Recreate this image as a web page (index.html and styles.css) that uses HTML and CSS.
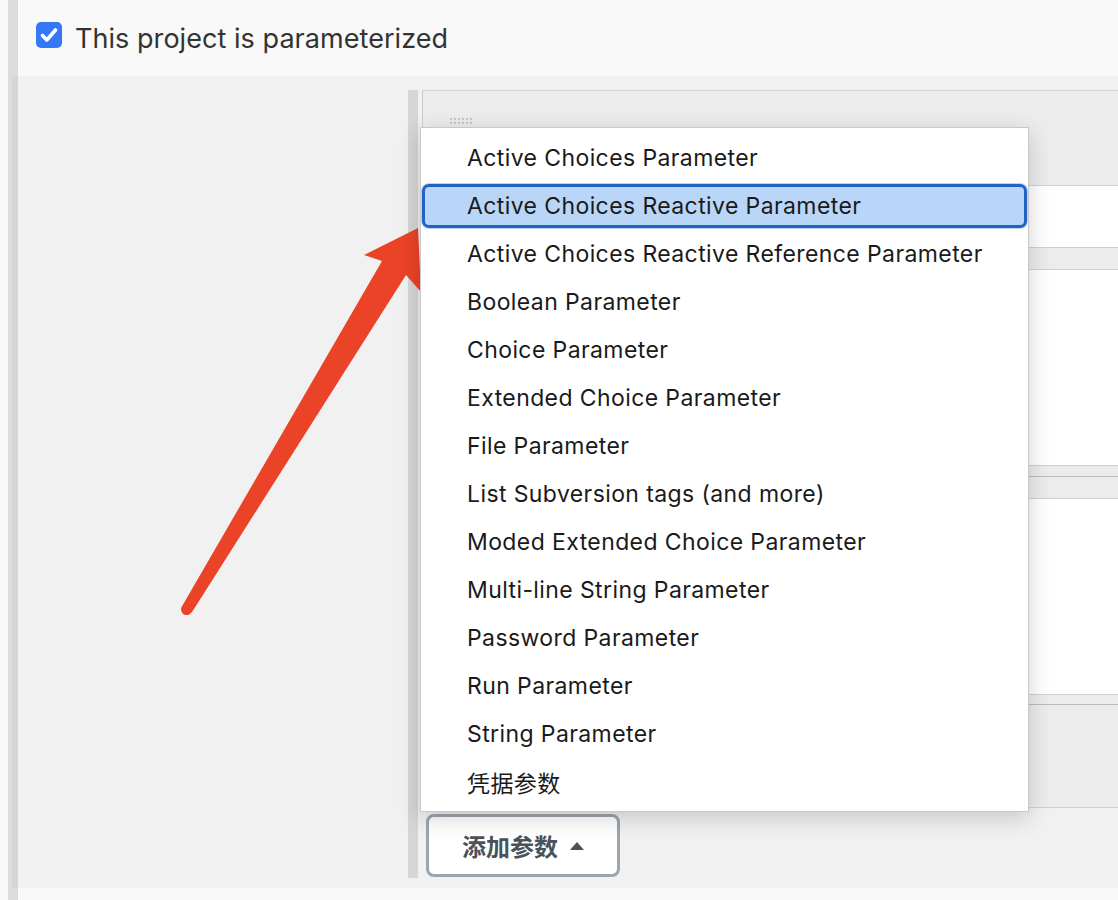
FILE: index.html
```html
<!DOCTYPE html>
<html lang="zh">
<head>
<meta charset="utf-8">
<title>Parameters</title>
<link rel="stylesheet" href="styles.css">
</head>
<body>
<div class="page">
  <div class="rail"></div>
  <div class="main">
    <div class="header">
      <span class="checkbox">
        <svg viewBox="0 0 26 26" width="26" height="26"><path d="M6.5 13.5 L10.8 18 L19.5 8" fill="none" stroke="#fff" stroke-width="3.6" stroke-linecap="round" stroke-linejoin="round"/></svg>
      </span>
      <span class="label">This project is parameterized</span>
    </div>
    <div class="panel">
      <div class="inner-rail"></div>
      <div class="content">
        <div class="chunk">
          <div class="head"><span class="grip"></span></div>
          <div class="field f1"></div>
          <div class="sub"></div>
          <div class="field f2"></div>
          <div class="gap g1"></div>
          <div class="sub"></div>
          <div class="field f2"></div>
          <div class="gap g2"></div>
          <div class="tail"></div>
        </div>
        <button class="add">添加参数<span class="tri"></span></button>
      </div>
    </div>
  </div>
</div>

<svg class="arrow" width="1118" height="900" viewBox="0 0 1118 900">
  <path d="M418,228 L364,255 L382,261 L181,608 Q181,616 188,615 Q191,614 194,609 L406,275 L421,292 Z" fill="#eb4327"/>
</svg>

<ul class="menu">
  <li class="item">Active Choices Parameter</li>
  <li class="item selected">Active Choices Reactive Parameter</li>
  <li class="item">Active Choices Reactive Reference Parameter</li>
  <li class="item">Boolean Parameter</li>
  <li class="item">Choice Parameter</li>
  <li class="item">Extended Choice Parameter</li>
  <li class="item">File Parameter</li>
  <li class="item">List Subversion tags (and more)</li>
  <li class="item">Moded Extended Choice Parameter</li>
  <li class="item">Multi-line String Parameter</li>
  <li class="item">Password Parameter</li>
  <li class="item">Run Parameter</li>
  <li class="item">String Parameter</li>
  <li class="item">凭据参数</li>
</ul>
</body>
</html>
```
FILE: styles.css
```css
html, body {
  margin: 0;
  padding: 0;
}
body {
  width: 1118px;
  height: 900px;
  overflow: hidden;
  background: #f9f9f9;
  font-family: "Inter", "Noto Sans CJK SC", sans-serif;
  position: relative;
}
.page {
  display: flex;
  padding-left: 8px;
  height: 900px;
}
.rail {
  width: 10px;
  flex: none;
  background: #dcdcdc;
}
.main {
  flex: 1;
  margin-left: -6px;
  min-width: 0;
}
.header {
  height: 76px;
  box-sizing: border-box;
  padding: 22px 0 0 24px;
  display: flex;
  align-items: flex-start;
}
.checkbox {
  width: 26px;
  height: 26px;
  border-radius: 5px;
  background: #3478f6;
  display: block;
  flex: none;
}
.checkbox svg { display: block; }
.label {
  margin-left: 13px;
  font-size: 27px;
  line-height: 32px;
  margin-top: 1px;
  letter-spacing: 0.05px;
  color: #333;
}
.panel {
  height: 812px;
  box-sizing: border-box;
  padding: 14px 0 10px 396px;
  background: rgba(0, 0, 0, 0.03);
  display: flex;
}
.inner-rail {
  width: 10px;
  flex: none;
  background: #d6d6d6;
}
.content {
  flex: 1;
  margin-left: 4px;
  min-width: 0;
}
.chunk {
  border-top: 1px solid #d4d4d4;
  border-left: 1px solid #cccccc;
}
.chunk > div {
  border-bottom: 1px solid #d0d0d0;
}
.head {
  height: 95px;
  background: #ececec;
  box-sizing: border-box;
  padding: 26px 0 0 26px;
}
.grip {
  display: block;
  width: 24px;
  height: 8px;
  background-image: radial-gradient(circle, #c6c6c6 1px, transparent 1.3px);
  background-size: 4px 4px;
}
.field { background: #ffffff; }
.f1 { height: 61px; }
.f2 { height: 195px; }
.sub { height: 21px; background: #ececec; }
.gap { background: #ececec; }
.chunk > .gap { border-bottom-color: #bcbcb6; }
.g1 { height: 10px; }
.g2 { height: 9px; }
.tail { height: 102px; background: #ececec; }
.add {
  margin: 6px 0 0 4px;
  width: 194px;
  height: 63px;
  box-sizing: border-box;
  border: 3px solid #9ba5ae;
  border-radius: 8px;
  background: #ffffff;
  padding: 0 0 0 33px;
  display: flex;
  align-items: center;
  font-family: "Inter", "Noto Sans CJK SC", sans-serif;
  font-size: 24px;
  font-weight: 600;
  color: #4a525b;
}
.tri {
  margin-left: 12px;
  width: 0;
  height: 0;
  border-left: 7px solid transparent;
  border-right: 7px solid transparent;
  border-bottom: 8px solid #4a525b;
}
.arrow {
  position: absolute;
  left: 0;
  top: 0;
  pointer-events: none;
}
.menu {
  position: absolute;
  left: 420px;
  top: 127px;
  width: 609px;
  height: 685px;
  box-sizing: border-box;
  margin: 0;
  padding: 6px 0 5px;
  list-style: none;
  background: #ffffff;
  border: 1px solid #c9c9c9;
  box-shadow: 0 6px 22px rgba(0, 0, 0, 0.18);
  display: flex;
  flex-direction: column;
}
.item {
  flex: none;
  height: 44px;
  margin: 2px 1px;
  box-sizing: border-box;
  border: 3px solid transparent;
  border-radius: 7px;
  padding-left: 42px;
  display: flex;
  align-items: center;
  font-size: 23px;
  letter-spacing: 0.4px;
  color: #1a1a1a;
  white-space: nowrap;
}
.item.selected {
  background: #b9d6f8;
  border-color: #2262c6;
  box-shadow: 0 0 0 1px rgba(140, 185, 245, 0.6);
}
```
